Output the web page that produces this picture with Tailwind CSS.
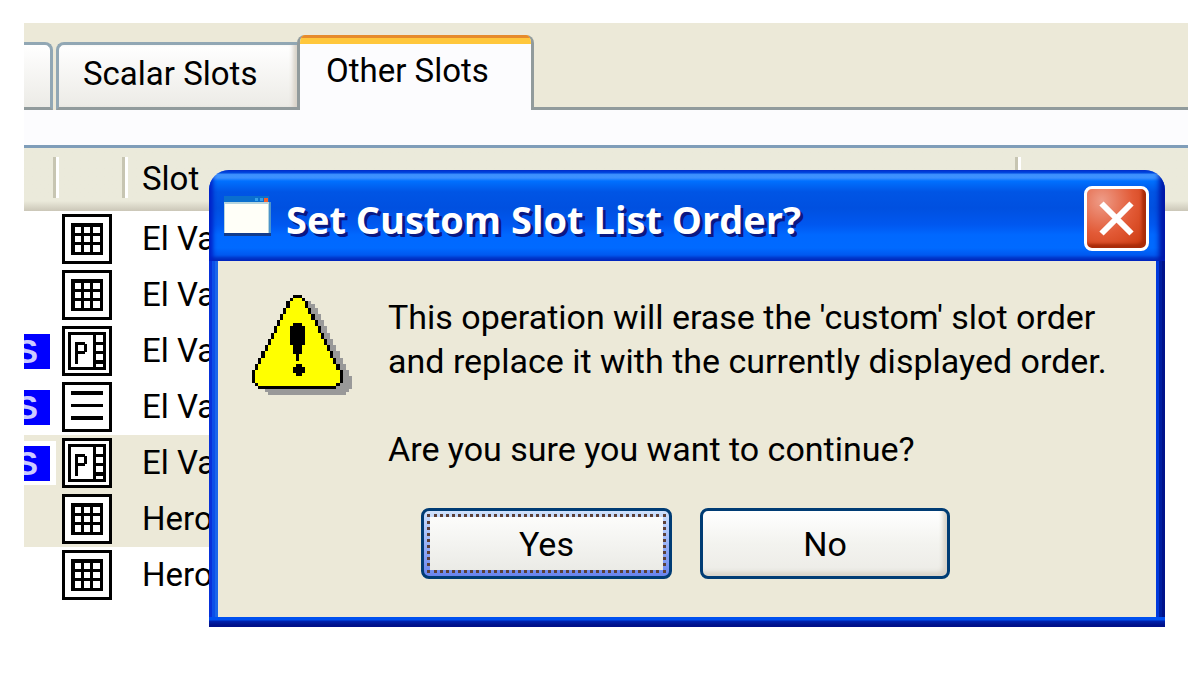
<!DOCTYPE html>
<html lang="en">
	<head>
		<meta charset="UTF-8" />
		<meta name="viewport" content="width=device-width, initial-scale=1.0" />
		<title>Slot List</title>
		<script src="https://cdn.jsdelivr.net/npm/@tailwindcss/browser@4"></script>
	</head>
	<body class="min-h-screen bg-white text-black font-['Roboto',sans-serif]">
		<!-- Icons shared by the slot rows -->
		<svg class="hidden">
			<symbol id="grid" viewBox="0 0 16 16">
				<path fill="#fff" d="M0 0h16v16H0z" />
				<path
					fill="none"
					stroke="#000"
					d="M.5 .5h15v15H.5zM3.5 3.5h9v9h-9zM6.5 3v10M9.5 3v10M3 6.5h10M3 9.5h10"
				/>
			</symbol>
			<symbol id="periodic" viewBox="0 0 16 16">
				<path fill="#fff" d="M0 0h16v16H0z" />
				<path
					fill="none"
					stroke="#000"
					d="M.5 .5h15v15H.5zM2.5 2.5h11v11h-11zM10.5 3v10M11 5.5h2M11 8.5h2M11 11.5h2M4.5 5v7M5 5.5h2.300M5 8.500h2.300M7.500 5.700v2.600"
				/>
			</symbol>
			<symbol id="lines" viewBox="0 0 16 16">
				<path fill="#fff" d="M0 0h16v16H0z" />
				<path
					fill="none"
					stroke="#000"
					d="M.5 .5h15v15H.5zM3 3.5h10M3 7.5h10M3 11.5h10"
				/>
			</symbol>
		</svg>

		<main class="relative pt-[23px] pl-6 pr-3">
			<!-- Tabs -->
			<div class="flex h-[87px] items-end bg-[#ece9d8]" role="tablist">
				<button
					type="button"
					role="tab"
					aria-label="Previous tab"
					class="h-[68px] w-[29px] mr-[3px] rounded-tr-lg border-t-3 border-r-3 border-b-3 border-[#91a7b4] border-b-[#919b9c] bg-linear-to-b from-white to-[#ecebe6]"
				></button>
				<button
					type="button"
					role="tab"
					class="h-[68px] w-[241px] pl-6 pb-1 text-left text-[33px] leading-10 rounded-tl-lg border-t-3 border-l-3 border-b-3 border-[#91a7b4] border-b-[#919b9c] bg-linear-to-b from-white to-[#ecebe6] shadow-[inset_-6px_0_4px_-2px_#d9d3c9]"
				>
					Scalar Slots
				</button>
				<button
					type="button"
					role="tab"
					aria-selected="true"
					class="relative flex h-[75px] w-[237px] flex-col rounded-t-lg overflow-hidden border-x-3 border-[#919b9c] bg-[#fcfcfe] text-left text-[33px] leading-10"
				>
					<span class="absolute -inset-x-[3px] top-0 h-[9px] border-t-3 border-[#e68b2c] bg-[#ffc73c]"></span>
					<span class="pt-4 pl-[26px]">Other Slots</span>
				</button>
				<div class="h-[3px] flex-1 bg-[#919b9c]"></div>
			</div>
			<div class="h-[38px] border-b-3 border-[#7f9db9] bg-[#fcfcfe]"></div>

			<!-- Slot list -->
			<table class="w-full table-fixed border-collapse text-left text-[33px] leading-10">
				<colgroup>
					<col class="w-[35px]" />
					<col class="w-[69px]" />
					<col class="w-[893px]" />
					<col />
				</colgroup>
				<thead>
					<tr class="h-[63px] bg-linear-to-b from-[#ebeadb] from-84% to-[#cbc7b8]">
						<th class="p-0 font-normal"><div class="-mt-1 h-[41px] border-r-3 border-white"><div class="h-full border-r-3 border-[#c7c5b2]"></div></div></th>
						<th class="p-0 font-normal"><div class="-mt-1 h-[41px] border-r-3 border-white"><div class="h-full border-r-3 border-[#c7c5b2]"></div></div></th>
						<th class="p-0 font-normal"><div class="-mt-1 h-[41px] border-r-3 border-white"><div class="h-full border-r-3 border-[#c7c5b2] pt-0.5 pl-[14px]">Slot</div></div></th>
						<th class="p-0"></th>
					</tr>
				</thead>
				<tbody>
					<tr class="h-14">
						<td class="p-0"></td>
						<td class="p-0 pl-[3px]"><svg class="size-[50px]" shape-rendering="crispEdges"><use href="#grid" /></svg></td>
						<td class="p-0 pl-[14px]">El Va</td>
						<td class="p-0"></td>
					</tr>
					<tr class="h-14">
						<td class="p-0"></td>
						<td class="p-0 pl-[3px]"><svg class="size-[50px]" shape-rendering="crispEdges"><use href="#grid" /></svg></td>
						<td class="p-0 pl-[14px]">El Va</td>
						<td class="p-0"></td>
					</tr>
					<tr class="h-14">
						<td class="p-0"><div class="flex h-11 w-8 items-center bg-white"><span class="flex h-[35px] w-[26px] justify-end overflow-hidden bg-[#0000ff] pr-3 font-['Liberation_Sans'] text-[33px] leading-9 font-bold text-[#ccccff]">S</span></div></td>
						<td class="p-0 pl-[3px]"><svg class="size-[50px]" shape-rendering="crispEdges"><use href="#periodic" /></svg></td>
						<td class="p-0 pl-[14px]">El Va</td>
						<td class="p-0"></td>
					</tr>
					<tr class="h-14">
						<td class="p-0"><div class="flex h-11 w-8 items-center bg-white"><span class="flex h-[35px] w-[26px] justify-end overflow-hidden bg-[#0000ff] pr-3 font-['Liberation_Sans'] text-[33px] leading-9 font-bold text-[#ccccff]">S</span></div></td>
						<td class="p-0 pl-[3px]"><svg class="size-[50px]" shape-rendering="crispEdges"><use href="#lines" /></svg></td>
						<td class="p-0 pl-[14px]">El Va</td>
						<td class="p-0"></td>
					</tr>
					<tr class="h-14 bg-[#ece9d8]">
						<td class="p-0"><div class="flex h-11 w-8 items-center bg-white"><span class="flex h-[35px] w-[26px] justify-end overflow-hidden bg-[#0000ff] pr-3 font-['Liberation_Sans'] text-[33px] leading-9 font-bold text-[#ccccff]">S</span></div></td>
						<td class="p-0 pl-[3px]"><svg class="size-[50px]" shape-rendering="crispEdges"><use href="#periodic" /></svg></td>
						<td class="p-0 pl-[14px]">El Va</td>
						<td class="bg-white p-0"></td>
					</tr>
					<tr class="h-14 bg-[#ece9d8]">
						<td class="p-0"></td>
						<td class="p-0 pl-[3px]"><svg class="size-[50px]" shape-rendering="crispEdges"><use href="#grid" /></svg></td>
						<td class="p-0 pl-[14px]">Hero</td>
						<td class="bg-white p-0"></td>
					</tr>
					<tr class="h-14">
						<td class="p-0"></td>
						<td class="p-0 pl-[3px]"><svg class="size-[50px]" shape-rendering="crispEdges"><use href="#grid" /></svg></td>
						<td class="p-0 pl-[14px]">Hero</td>
						<td class="p-0"></td>
					</tr>
				</tbody>
			</table>

			<!-- Confirm dialog -->
			<section
				role="dialog"
				aria-labelledby="dialogTitle"
				class="absolute top-[170px] left-[209px] w-[956px] overflow-hidden rounded-t-[20px]"
			>
				<header
					class="flex h-[91px] items-center pl-[15px] pr-4 bg-[linear-gradient(to_bottom,#0058ee_0,#0058ee_3px,#3f95ff_4px,#3a90ff_8px,#0070ff_11px,#0055e5_22px,#0050e0_38px,#0058f0_55px,#0068ff_65px,#006aff_78px,#0058f0_85px,#0040d0_88px,#0038c0_91px)] shadow-[inset_4px_0_4px_#0020c8,inset_-6px_0_5px_#0018a8]"
				>
					<svg class="h-10 w-12" viewBox="0 0 48 40">
						<path fill="#0a6fce" d="M0 0h45v7H0z" />
						<path fill="#35a0e8" d="M31 2h3v3h-3zM36 2h3v3h-3z" />
						<path fill="#f06030" d="M40 2h4v4h-4z" />
						<path fill="#b5d5df" d="M0 6h45v31H0z" />
						<path fill="#fffff8" d="M1 8h43v29H1z" />
						<path fill="#4c94cc" d="M45 6h2v31h-2z" />
						<path fill="#123c8c" d="M0 37h47v3H0z" />
					</svg>
					<h1
						id="dialogTitle"
						class="flex-1 pt-1.5 pl-[14px] text-[38px] leading-10 font-bold text-white font-['Open_Sans'] [text-shadow:3px_3px_0_#0a1883]"
					>
						Set Custom Slot List Order?
					</h1>
					<button
						type="button"
						aria-label="Close"
						class="mt-1.5 flex size-[65px] items-center justify-center rounded-lg border-3 border-white bg-radial-[at_25%_20%] from-[#ee9c88] via-[#e25a36] via-50% to-[#c83408] shadow-[inset_-4px_-4px_3px_#a82c0a]"
					>
						<svg class="size-[35px]" viewBox="0 0 35 35">
							<path stroke="#fff" stroke-width="6" d="M2.500 2.500l30 30M32.500 2.500l-30 30" />
						</svg>
					</button>
				</header>
				<div
					class="px-[9px] bg-[linear-gradient(to_right,#0831d9_0_3px,#0c4fe8_3px_6px,#1a66ea_6px_50%,#0038dc_50%_calc(100%-6px),#001ea0_calc(100%-6px)_calc(100%-3px),#00138c_calc(100%-3px))]"
				>
					<div class="bg-[#ece9d8] pb-[38px]">
						<div class="flex pt-[34px] pl-[34px]">
							<svg class="size-[100px] shrink-0" viewBox="0 0 32 32" shape-rendering="crispEdges">
								<path
									fill="#999"
									transform="translate(3 2)"
									d="M13 0h3v1h1v1h1v2h1v2h1v2h1v2h1v2h1v2h1v2h1v2h1v2h1v2h1v2h1v4h-1v1h-1v1H2v-1h-1v-1h-1v-4h1v-2h1v-2h1v-2h1v-2h1v-2h1v-2h1v-2h1v-2h1v-2h1v-2h1v-2h1v-1h1z"
								/>
								<path
									d="M13 0h3v1h1v1h1v2h1v2h1v2h1v2h1v2h1v2h1v2h1v2h1v2h1v2h1v2h1v4h-1v1h-1v1H2v-1h-1v-1h-1v-4h1v-2h1v-2h1v-2h1v-2h1v-2h1v-2h1v-2h1v-2h1v-2h1v-2h1v-2h1v-1h1z"
								/>
								<path
									fill="#ff0"
									d="M13 1h3v1h1v2h1v2h1v2h1v2h1v2h1v2h1v2h1v2h1v2h1v2h1v2h1v4h-1v1H2v-1h-1v-4h1v-2h1v-2h1v-2h1v-2h1v-2h1v-2h1v-2h1v-2h1v-2h1v-2h1v-2h1z"
								/>
								<path d="M13 9h3v1h1v6h-1v3h-1v2h-1v-2h-1v-3h-1v-6h1zM14 22h2v1h1v2h-1v1h-2v-1h-1v-2h1z" />
							</svg>
							<div class="pl-9 text-[34px] leading-11">
								<p>
									This operation will erase the 'custom' slot order<br />and
									replace it with the currently displayed order.
								</p>
								<p class="pt-11">Are you sure you want to continue?</p>
							</div>
						</div>
						<div class="flex gap-7 pt-[37px] pl-[203px] text-[34px] leading-10">
							<button
								type="button"
								class="h-[71px] w-[251px] rounded-lg border-3 border-[#003c74] bg-linear-to-b from-[#cfe2fc] to-[#6a84ee] p-[3px]"
							>
								<span
									class="flex h-full items-center justify-center border-3 border-dotted border-[#5c4038] bg-linear-to-b from-[#fcfcfb] to-[#ebebe6] bg-clip-padding"
									>Yes</span
								>
							</button>
							<button
								type="button"
								class="h-[71px] w-[250px] rounded-lg border-3 border-[#003c74] bg-linear-to-b from-white via-[#f3f3ef] to-[#ecebe6] shadow-[inset_-4px_-4px_4px_#d9d3c9]"
							>
								No
							</button>
						</div>
					</div>
				</div>
				<div class="h-[10px] bg-[linear-gradient(to_bottom,#0050f0_0_3px,#0022b0_4px,#00108a_8px)]"></div>
			</section>
		</main>
	</body>
</html>
